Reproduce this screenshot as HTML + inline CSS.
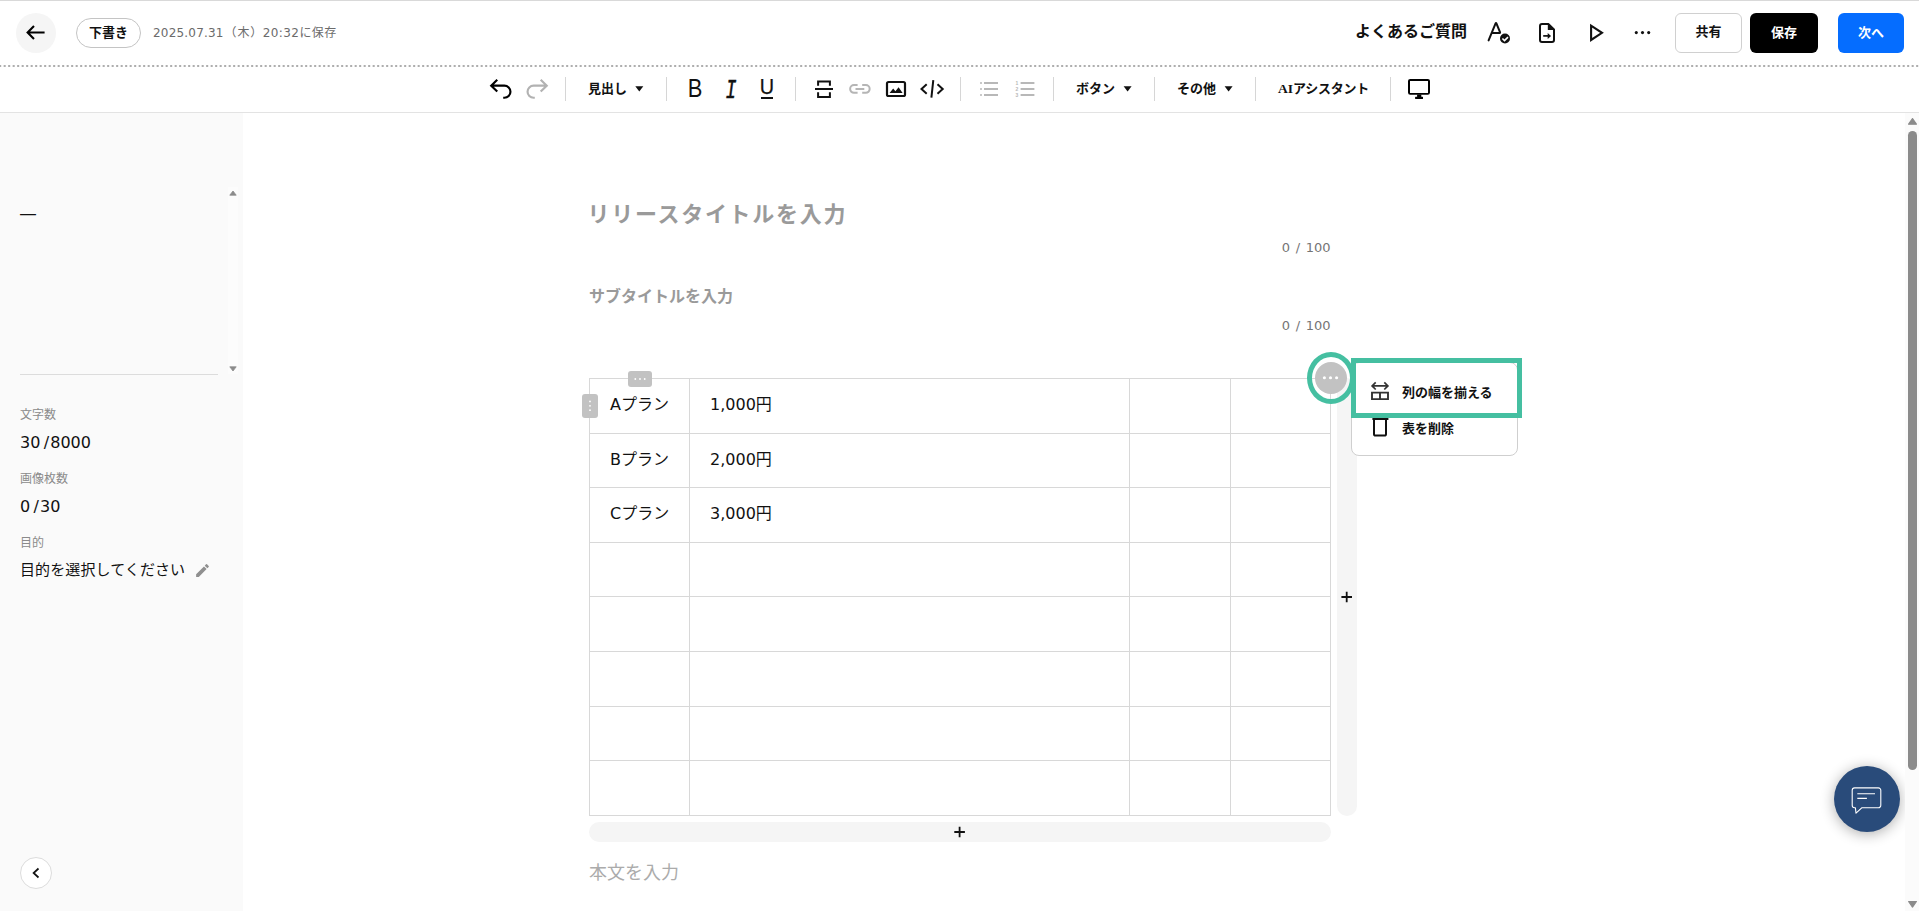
<!DOCTYPE html>
<html lang="ja">
<head>
<meta charset="utf-8">
<title>プレスリリース エディター</title>
<style>
*{box-sizing:border-box;margin:0;padding:0}
html,body{width:1919px;height:911px;overflow:hidden;background:#fff}
body{font-family:"Liberation Sans","Noto Sans CJK JP",sans-serif;color:#111;position:relative}
.abs{position:absolute}
#topline{left:0;top:0;width:1919px;height:1px;background:#d9d9d9}
#header{left:0;top:1px;width:1919px;height:64px;background:#fff}
#dots{left:0;top:65px}
#back{left:16px;top:13px;width:40px;height:40px;border-radius:50%;background:#f5f5f5}
#pill{left:76px;top:18px;width:65px;height:30px;border:1px solid #c4c4c4;border-radius:15px;font-weight:bold;font-size:13px;line-height:28px;text-align:center;color:#111}
#saved{left:153px;top:23px;font-size:12px;line-height:20px;color:#6b6b6b;white-space:nowrap}
#faq{left:1355px;top:20px;font-size:16px;font-weight:bold;line-height:24px;white-space:nowrap;color:#111}
.btn{top:13px;height:40px;border-radius:6px;font-size:13px;font-weight:bold;line-height:36.5px;text-align:center}
#share{left:1675px;width:67px;border:1px solid #d0d0d0;background:#fff;color:#111}
#save{left:1750px;width:68px;background:#000;color:#fff;line-height:39px}
#next{left:1838px;width:66px;background:#056dff;color:#fff;line-height:39px}
#toolbar{left:0;top:67px;width:1919px;height:46px;border-bottom:1px solid #e3e3e3;background:#fff}
.sep{top:77px;width:1px;height:24px;background:#d6d6d6}
.tl{top:79px;font-size:13px;font-weight:bold;line-height:20px;white-space:nowrap;color:#111}
#sidebar{left:0;top:113px;width:243px;height:798px;background:#fafafa}
.sl{left:20px;font-size:12px;line-height:16px;color:#8a8a8a;white-space:nowrap}
.sv{left:20px;font-size:15px;line-height:20px;color:#111;white-space:nowrap}
.gl{color:#111;text-align:center;white-space:nowrap}
.sv{font-size:16px}
.sv .n,.sv .sl2{font-family:"DejaVu Sans","Liberation Sans",sans-serif}
.sv .sl2{margin:0 1.2px 0 3.3px}
.ln{background:#d8d8d8}
.cnt{font-family:"DejaVu Sans","Liberation Sans",sans-serif;font-size:13px;line-height:20px;color:#757575;text-align:right;white-space:nowrap;word-spacing:1.5px;margin-left:-.5px}
.cell{font-family:"DejaVu Sans","Liberation Sans","Noto Sans CJK JP",sans-serif;font-size:16px;line-height:26px;color:#111;white-space:nowrap}
.mi{font-size:13px;font-weight:bold;line-height:21px;color:#111;white-space:nowrap}
.dj{font-family:"DejaVu Sans","Liberation Sans",sans-serif}
</style>
</head>
<body>
<div id="topline" class="abs"></div>
<div id="header" class="abs"></div>
<svg id="dots" class="abs" width="1919" height="2" viewBox="0 0 1919 2"><line x1="-0.85" y1="1" x2="1920" y2="1" stroke="#aeaeae" stroke-width="2" stroke-dasharray="2.05 2.45"/></svg>
<div id="back" class="abs"></div>
<svg class="abs" style="left:25px;top:23px" width="22" height="20" viewBox="0 0 22 20"><path d="M19.6 9.5H3M9 3L2.6 9.5L9 16" fill="none" stroke="#000" stroke-width="2.1"/></svg>
<div id="pill" class="abs">下書き</div>
<div id="saved" class="abs"><span class="dj" style="letter-spacing:.2px">2025.07.31</span><span style="margin-left:.8px;letter-spacing:.9px">（木）</span><span class="dj" style="margin-left:-.6px;letter-spacing:.45px">20:32</span><span style="letter-spacing:.4px">に保存</span></div>
<div id="faq" class="abs">よくあるご質問</div>
<div id="share" class="abs btn">共有</div>
<div id="save" class="abs btn">保存</div>
<div id="next" class="abs btn">次へ</div>


<!-- header icons -->
<svg class="abs" style="left:1484px;top:18px" width="30" height="28" viewBox="1484 18 30 28"><path d="M1488.6 40.4L1495.6 23.4Q1496 22.4 1496.4 23.4L1500 32.1Q1500.3 33.1 1499.2 33.1H1492" fill="none" stroke="#111" stroke-width="2" stroke-linejoin="round" stroke-linecap="round"/><circle cx="1505" cy="38.5" r="5" fill="#111"/><path d="M1502.4 38.5L1504.5 40.6L1508 37.1" fill="none" stroke="#fff" stroke-width="1.6"/></svg>
<svg class="abs" style="left:1536px;top:20px" width="22" height="25" viewBox="1536 20 22 25"><path d="M1548.6 24.1H1542A2 2 0 0 0 1540 26.1V39.9A2 2 0 0 0 1542 41.9H1552A2 2 0 0 0 1554 39.9V29.4Z" fill="none" stroke="#111" stroke-width="2" stroke-linejoin="round"/><path d="M1547.8 23.2V30H1554.8Z" fill="#111"/><path d="M1543.2 35.9H1549" fill="none" stroke="#111" stroke-width="1.7"/><path d="M1547.7 32.9L1551.1 35.9L1547.7 38.9Z" fill="#111"/></svg>
<svg class="abs" style="left:1586px;top:20px" width="22" height="26" viewBox="1586 20 22 26"><path d="M1591.1 25.6V40L1602 32.8Z" fill="none" stroke="#111" stroke-width="2.1" stroke-linejoin="miter"/></svg>
<svg class="abs" style="left:1632px;top:28px" width="22" height="10" viewBox="1632 28 22 10"><circle cx="1636.3" cy="32.6" r="1.55" fill="#111"/><circle cx="1642.5" cy="32.6" r="1.55" fill="#111"/><circle cx="1648.7" cy="32.6" r="1.55" fill="#111"/></svg>

<div id="toolbar" class="abs"></div>


<!-- toolbar icons -->
<svg class="abs" style="left:486px;top:75px" width="30" height="28" viewBox="486 75 30 28"><path d="M497.25 79.7L491.2 85.65L497.25 91.6M491.4 85.65H504.4A6.05 6.05 0 0 1 504.4 97.75H503.2" fill="none" stroke="#000" stroke-width="2.15"/></svg>
<svg class="abs" style="left:522px;top:75px" width="30" height="28" viewBox="522 75 30 28"><path d="M540.7 79.7L546.75 85.65L540.7 91.6M546.5 85.65H533.6A6.05 6.05 0 0 0 533.6 97.75H534.8" fill="none" stroke="#b2b2b2" stroke-width="2.15"/></svg>
<div class="abs sep" style="left:565px"></div>
<div class="abs tl" style="left:588px">見出し</div>
<svg class="abs" style="left:635px;top:86px" width="9" height="6" viewBox="0 0 9 6"><path d="M0.3 0.2H8.3L4.3 5.6Z" fill="#111"/></svg>
<div class="abs sep" style="left:666px"></div>
<div class="abs gl" id="gB" style="left:686px;top:72.8px;width:18px;font-size:25.5px;line-height:30px;transform:scaleX(.86)">B</div>
<div class="abs gl" id="gI" style="left:721px;top:76px;width:20px;transform:scaleX(.68);font-family:'Liberation Mono',monospace;font-style:italic;font-size:27px;line-height:30px;-webkit-text-stroke:.5px #111">I</div>
<div class="abs gl" id="gU" style="-webkit-text-stroke:.25px #111;left:757px;top:72px;width:20px;transform:scaleX(.9);font-size:22px;line-height:30px">U</div>
<div class="abs" style="left:761px;top:97px;width:12px;height:2px;background:#111"></div>
<div class="abs sep" style="left:795px"></div>
<svg class="abs" style="left:813px;top:78px" width="22" height="22" viewBox="813 78 22 22"><path d="M815 89H833M818.1 85.8V81.4H829.9V85.8M818.1 92.2V96.9H829.9V92.2" fill="none" stroke="#111" stroke-width="2"/></svg>
<svg class="abs" style="left:847px;top:82px" width="26" height="14" viewBox="847 82 26 14"><path d="M857.6 85.1H854A3.85 3.85 0 0 0 854 92.8H857.6M862.2 85.1H865.8A3.85 3.85 0 0 1 865.8 92.8H862.2M855.5 88.95H864.3" fill="none" stroke="#b5b5b5" stroke-width="2"/></svg>
<svg class="abs" style="left:884px;top:79px" width="24" height="20" viewBox="884 79 24 20"><rect x="887" y="82" width="18" height="14" rx="1.6" fill="none" stroke="#111" stroke-width="2.2"/><path d="M889.6 93L893.2 88.6L895.4 91.2L898.6 87.2L902.6 93Z" fill="#111"/></svg>
<svg class="abs" style="left:918px;top:78px" width="28" height="22" viewBox="918 78 28 22"><path d="M926.7 84.3L921.5 89L926.7 93.7M937.5 84.3L942.7 89L937.5 93.7M933.3 80.2L931.4 97.7" fill="none" stroke="#111" stroke-width="2"/></svg>
<div class="abs sep" style="left:960px"></div>
<svg class="abs" style="left:979px;top:80px" width="20" height="18" viewBox="979 80 20 18"><path d="M984 83H998M984 89H998M984 95H998" stroke="#b8b8b8" stroke-width="2" fill="none"/><path d="M980 83H982M980 89H982M980 95H982" stroke="#b8b8b8" stroke-width="1.6" fill="none"/></svg>
<svg class="abs" style="left:1014px;top:80px" width="22" height="18" viewBox="1014 80 22 18"><path d="M1020.6 83H1034.4M1020.6 89H1034.4M1020.6 95H1034.4" stroke="#b8b8b8" stroke-width="2" fill="none"/><text x="1015.5" y="84.9" font-size="5" fill="#b8b8b8" font-family="Liberation Sans, sans-serif" font-weight="bold">1</text><text x="1015.5" y="90.9" font-size="5" fill="#b8b8b8" font-family="Liberation Sans, sans-serif" font-weight="bold">2</text><text x="1015.5" y="96.9" font-size="5" fill="#b8b8b8" font-family="Liberation Sans, sans-serif" font-weight="bold">3</text></svg>
<div class="abs sep" style="left:1053px"></div>
<div class="abs tl" style="left:1076px">ボタン</div>
<svg class="abs" style="left:1123px;top:86px" width="9" height="6" viewBox="0 0 9 6"><path d="M0.6 0.2H8.6L4.6 5.6Z" fill="#111"/></svg>
<div class="abs sep" style="left:1154px"></div>
<div class="abs tl" style="left:1177px">その他</div>
<svg class="abs" style="left:1224px;top:86px" width="9" height="6" viewBox="0 0 9 6"><path d="M0.6 0.2H8.6L4.6 5.6Z" fill="#111"/></svg>
<div class="abs sep" style="left:1255px"></div>
<div class="abs tl" style="left:1278px"><span style="font-family:'Liberation Serif',serif;font-size:13.5px">AI</span><span style="letter-spacing:-.25px">アシスタント</span></div>
<div class="abs sep" style="left:1390px"></div>
<svg class="abs" style="left:1405px;top:76px" width="28" height="26" viewBox="1405 76 28 26"><path fill-rule="evenodd" d="M1410.2 78.9H1427.8A2.2 2.2 0 0 1 1430 81.1V92.6A2.2 2.2 0 0 1 1427.8 94.8H1410.2A2.2 2.2 0 0 1 1408 92.6V81.1A2.2 2.2 0 0 1 1410.2 78.9ZM1410 80.9V92.9H1428V80.9Z" fill="#000"/><path d="M1417.1 94.6H1421.3V96.8H1422.5A.5 .5 0 0 1 1423 97.3V98.4A.5 .5 0 0 1 1422.5 98.9H1415.6A.5 .5 0 0 1 1415.1 98.4V97.3A.5 .5 0 0 1 1415.6 96.8H1417.1Z" fill="#000"/></svg>


<div id="sidebar" class="abs"></div>
<div class="abs" style="left:228px;top:187px;width:10px;height:187px;background:#fcfcfc"></div>
<svg class="abs" style="left:229px;top:190px" width="8" height="6" viewBox="0 0 8 6"><path d="M0.8 5.2L4 1L7.2 5.2Z" fill="#8b8b8b" stroke="#8b8b8b" stroke-width=".8" stroke-linejoin="round"/></svg>
<svg class="abs" style="left:229px;top:366px" width="8" height="6" viewBox="0 0 8 6"><path d="M0.8 0.8L4 5L7.2 0.8Z" fill="#8b8b8b" stroke="#8b8b8b" stroke-width=".8" stroke-linejoin="round"/></svg>
<div class="abs" id="dash" style="left:20px;top:204px;font-size:16px;line-height:20px;color:#111">—</div>
<div class="abs" style="left:20px;top:374px;width:198px;height:1px;background:#dcdcdc"></div>
<div class="abs sl" style="top:407px">文字数</div>
<div class="abs sv" style="top:432.5px"><span class="n">30</span><span class="sl2">/</span><span class="n">8000</span></div>
<div class="abs sl" style="top:471px">画像枚数</div>
<div class="abs sv" style="top:497px"><span class="n">0</span><span class="sl2">/</span><span class="n">30</span></div>
<div class="abs sl" style="top:535px">目的</div>
<div class="abs sv" style="top:559.5px;font-size:15px;letter-spacing:.1px">目的を選択してください</div>
<svg class="abs" style="left:194px;top:562px" width="17" height="17" viewBox="0 0 24 24"><path d="M3 17.25V21h3.750L17.810 9.940l-3.750-3.750L3 17.250zM20.710 7.040a1 1 0 0 0 0-1.410l-2.340-2.340a1 1 0 0 0-1.410 0l-1.830 1.830 3.750 3.750 1.830-1.830z" fill="#8f8f8f"/></svg>
<div class="abs" style="left:20px;top:857px;width:32px;height:32px;border-radius:50%;background:#fff;border:1px solid #dcdcdc"></div>
<svg class="abs" style="left:28px;top:864px" width="16" height="18" viewBox="28 864 16 18"><path d="M38.5 868.5L33.6 873L38.5 877.5" fill="none" stroke="#111" stroke-width="1.7"/></svg>


<!-- main content -->
<div class="abs" id="ttl" style="left:587.5px;top:196.5px;font-size:22px;letter-spacing:1.7px;line-height:36px;font-weight:bold;color:#9a9a9a;white-space:nowrap">リリースタイトルを入力</div>
<div class="abs cnt" style="left:1231px;top:238px;width:100px">0 / 100</div>
<div class="abs" id="sub" style="left:589px;top:285px;font-size:16px;line-height:24px;font-weight:bold;color:#9a9a9a;white-space:nowrap">サブタイトルを入力</div>
<div class="abs cnt" style="left:1231px;top:316px;width:100px">0 / 100</div>
<div class="abs" style="left:1337px;top:378px;width:20px;height:438px;border-radius:10px;background:#f5f5f5"></div>
<div class="abs" style="left:589px;top:822px;width:742px;height:20px;border-radius:10px;background:#f5f5f5"></div>
<div class="abs ln" style="left:589px;top:378px;width:742px;height:1px"></div>
<div class="abs ln" style="left:589px;top:433px;width:742px;height:1px"></div>
<div class="abs ln" style="left:589px;top:487px;width:742px;height:1px"></div>
<div class="abs ln" style="left:589px;top:542px;width:742px;height:1px"></div>
<div class="abs ln" style="left:589px;top:596px;width:742px;height:1px"></div>
<div class="abs ln" style="left:589px;top:651px;width:742px;height:1px"></div>
<div class="abs ln" style="left:589px;top:706px;width:742px;height:1px"></div>
<div class="abs ln" style="left:589px;top:760px;width:742px;height:1px"></div>
<div class="abs ln" style="left:589px;top:815px;width:742px;height:1px"></div>
<div class="abs ln" style="left:589px;top:378px;width:1px;height:438px"></div>
<div class="abs ln" style="left:689px;top:378px;width:1px;height:438px"></div>
<div class="abs ln" style="left:1129px;top:378px;width:1px;height:438px"></div>
<div class="abs ln" style="left:1230px;top:378px;width:1px;height:438px"></div>
<div class="abs ln" style="left:1330px;top:378px;width:1px;height:438px"></div>

<div class="abs cell" style="left:610px;top:392px">Aプラン</div>
<div class="abs cell" style="left:610px;top:447px">Bプラン</div>
<div class="abs cell" style="left:610px;top:501px">Cプラン</div>
<div class="abs cell num" style="left:710px;top:392px">1,000円</div>
<div class="abs cell num" style="left:710px;top:447px">2,000円</div>
<div class="abs cell num" style="left:710px;top:501px">3,000円</div>
<div class="abs" style="left:628px;top:371px;width:24px;height:15.6px;border-radius:3px;background:#c2c2c2"></div>
<svg class="abs" style="left:632px;top:375px" width="16" height="8" viewBox="632 375 16 8"><circle cx="635.3" cy="379" r=".9" fill="#fff"/><circle cx="640" cy="379" r=".9" fill="#fff"/><circle cx="644.7" cy="379" r=".9" fill="#fff"/></svg>
<div class="abs" style="left:582px;top:394px;width:16px;height:24px;border-radius:3px;background:#c2c2c2"></div>
<svg class="abs" style="left:586px;top:398px" width="8" height="16" viewBox="586 398 8 16"><circle cx="590" cy="401.4" r=".9" fill="#fff"/><circle cx="590" cy="405.8" r=".9" fill="#fff"/><circle cx="590" cy="410.2" r=".9" fill="#fff"/></svg>
<svg class="abs" style="left:1340px;top:590px" width="14" height="14" viewBox="1340 590 14 14"><path d="M1341.4 597H1352M1346.7 591.7V602.3" stroke="#111" stroke-width="1.8" fill="none"/></svg>
<svg class="abs" style="left:953px;top:825px" width="14" height="14" viewBox="953 825 14 14"><path d="M954.3 832H964.9M959.6 826.7V837.3" stroke="#111" stroke-width="1.8" fill="none"/></svg>
<div class="abs" id="body" style="left:589px;top:859px;font-size:18px;line-height:28px;color:#ababab;white-space:nowrap">本文を入力</div>

<!-- table menu -->
<div class="abs" style="left:1315px;top:362px;width:32px;height:32px;border-radius:50%;background:#c2c2c2"></div>
<svg class="abs" style="left:1320px;top:374px" width="22" height="8" viewBox="1320 374 22 8"><circle cx="1324.4" cy="377.8" r="1.55" fill="#fff"/><circle cx="1330.5" cy="377.8" r="1.55" fill="#fff"/><circle cx="1336.6" cy="377.8" r="1.55" fill="#fff"/></svg>
<div class="abs" style="left:1351px;top:362px;width:167px;height:94px;border:1px solid #cfcfcf;border-radius:8px;background:#fff"></div>
<svg class="abs" style="left:1368px;top:380px" width="24" height="22" viewBox="1368 380 24 22"><path d="M1372.4 385.9H1387.6M1375.7 382.3L1372.1 385.9L1375.7 389.5M1384.3 382.3L1387.9 385.9L1384.3 389.5" fill="none" stroke="#333" stroke-width="1.7"/><path d="M1372 392.6H1388V399.1H1372ZM1380 392.6V399.1" fill="none" stroke="#333" stroke-width="1.9"/></svg>
<div class="abs mi" style="left:1402px;top:382px">列の幅を揃える</div>
<svg class="abs" style="left:1370px;top:414px" width="20" height="26" viewBox="1370 414 20 26"><path d="M1372.4 419H1388.4M1374 419V434.2A1.4 1.4 0 0 0 1375.4 435.6H1384.6A1.4 1.4 0 0 0 1386 434.2V419M1377.4 419V416.4H1383.4V419" fill="none" stroke="#111" stroke-width="2"/></svg>
<div class="abs mi" style="left:1402px;top:418px">表を削除</div>
<div class="abs" style="left:1307px;top:352px;width:48px;height:52px;border:5px solid #45bfa1;border-radius:50%"></div>
<div class="abs" style="left:1351px;top:358px;width:171px;height:60px;border:5px solid #45bfa1"></div>

<!-- chat -->
<div class="abs" style="left:1834px;top:766px;width:66px;height:66px;border-radius:50%;background:#294b7a;box-shadow:0 2px 14px rgba(0,0,0,.32)"></div>
<svg class="abs" style="left:1848px;top:784px" width="38" height="34" viewBox="1848 784 38 34"><path d="M1854.6 787.9H1878.4A2.4 2.4 0 0 1 1880.8 790.3V805.3A2.4 2.4 0 0 1 1878.4 807.7H1862L1856 813.2L1855.4 807.7H1854.6A2.4 2.4 0 0 1 1852.2 805.3V790.3A2.4 2.4 0 0 1 1854.6 787.9Z" fill="none" stroke="#fff" stroke-width="1.1" stroke-linejoin="round"/><path d="M1857.3 793.7H1875M1857.3 798.4H1866.9" stroke="#fff" stroke-width="1.1" fill="none"/></svg>

<!-- page scrollbar -->
<div class="abs" style="left:1905px;top:113px;width:14px;height:798px;background:#fbfbfb"></div>
<svg class="abs" style="left:1906px;top:116px" width="12" height="10" viewBox="1906 116 12 10"><path d="M1908.6 124.2L1912.5 118.6L1916.4 124.2Z" fill="#8b8b8b" stroke="#8b8b8b" stroke-width="1.2" stroke-linejoin="round"/></svg>
<div class="abs" style="left:1908px;top:131px;width:9px;height:639px;border-radius:4.5px;background:#8b8b8b"></div>
<svg class="abs" style="left:1906px;top:899px" width="12" height="10" viewBox="1906 899 12 10"><path d="M1908.6 901.5L1912.5 907.1L1916.4 901.5Z" fill="#8b8b8b" stroke="#8b8b8b" stroke-width="1.2" stroke-linejoin="round"/></svg>
</body>
</html>
